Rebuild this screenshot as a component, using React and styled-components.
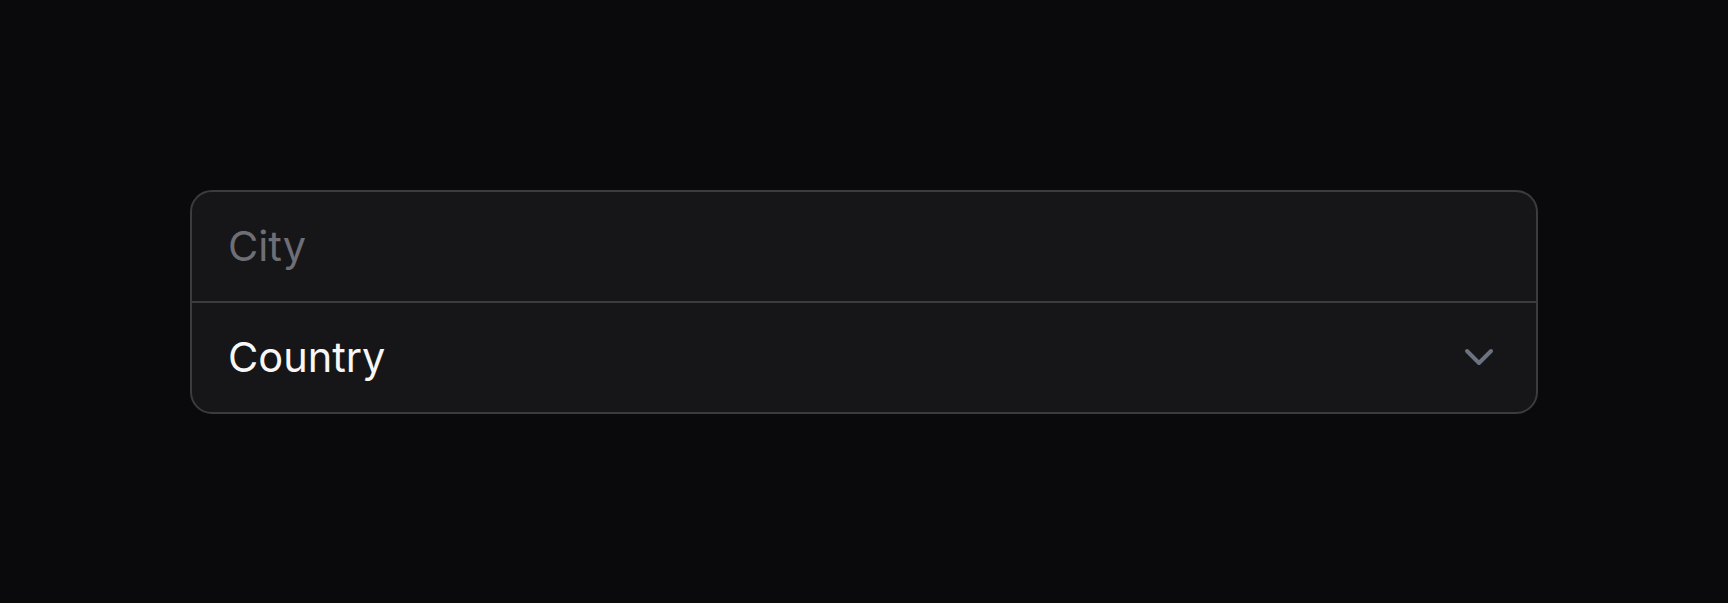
import React from "react";
import styled, { createGlobalStyle } from "styled-components";

const GlobalStyle = createGlobalStyle`
  html, body {
    margin: 0;
    padding: 0;
    background: #0a0a0c;
    font-family: Inter, "Noto Sans", sans-serif;
  }
`;

const Page = styled.main`
  height: 603px;
  display: flex;
  align-items: center;
  justify-content: center;
  padding: 0 190px;
  box-sizing: border-box;
`;

const FieldGroup = styled.div`
  width: 100%;
  display: flex;
  flex-direction: column;
  background: #161618;
  border: 2px solid #3c3c40;
  border-radius: 22px;
  overflow: hidden;
`;

const Row = styled.div`
  height: 109px;
  display: flex;
  align-items: center;
  padding: 0 33px 0 36px;

  & + & {
    border-top: 2px solid #3c3c40;
  }
`;

const TextInput = styled.input`
  flex: 1;
  border: none;
  outline: none;
  background: transparent;
  font-family: inherit;
  font-size: 41.5px;
  color: #f4f4f5;
  padding: 0;

  &::placeholder {
    color: #6e6e76;
  }
`;

const SelectLabel = styled.span`
  flex: 1;
  font-size: 41.5px;
  color: #f7f7f8;
`;

const Chevron = styled.svg`
  width: 48px;
  height: 48px;
  color: #6b7280;
`;

export default function App() {
  return (
    <>
      <GlobalStyle />
      <Page>
        <FieldGroup>
          <Row>
            <TextInput placeholder="City" />
          </Row>
          <Row>
            <SelectLabel>Country</SelectLabel>
            <Chevron
              viewBox="0 0 24 24"
              fill="none"
              stroke="currentColor"
              strokeWidth="2"
              strokeLinecap="round"
              strokeLinejoin="round"
            >
              <path d="m6 9 6 6 6-6" />
            </Chevron>
          </Row>
        </FieldGroup>
      </Page>
    </>
  );
}
